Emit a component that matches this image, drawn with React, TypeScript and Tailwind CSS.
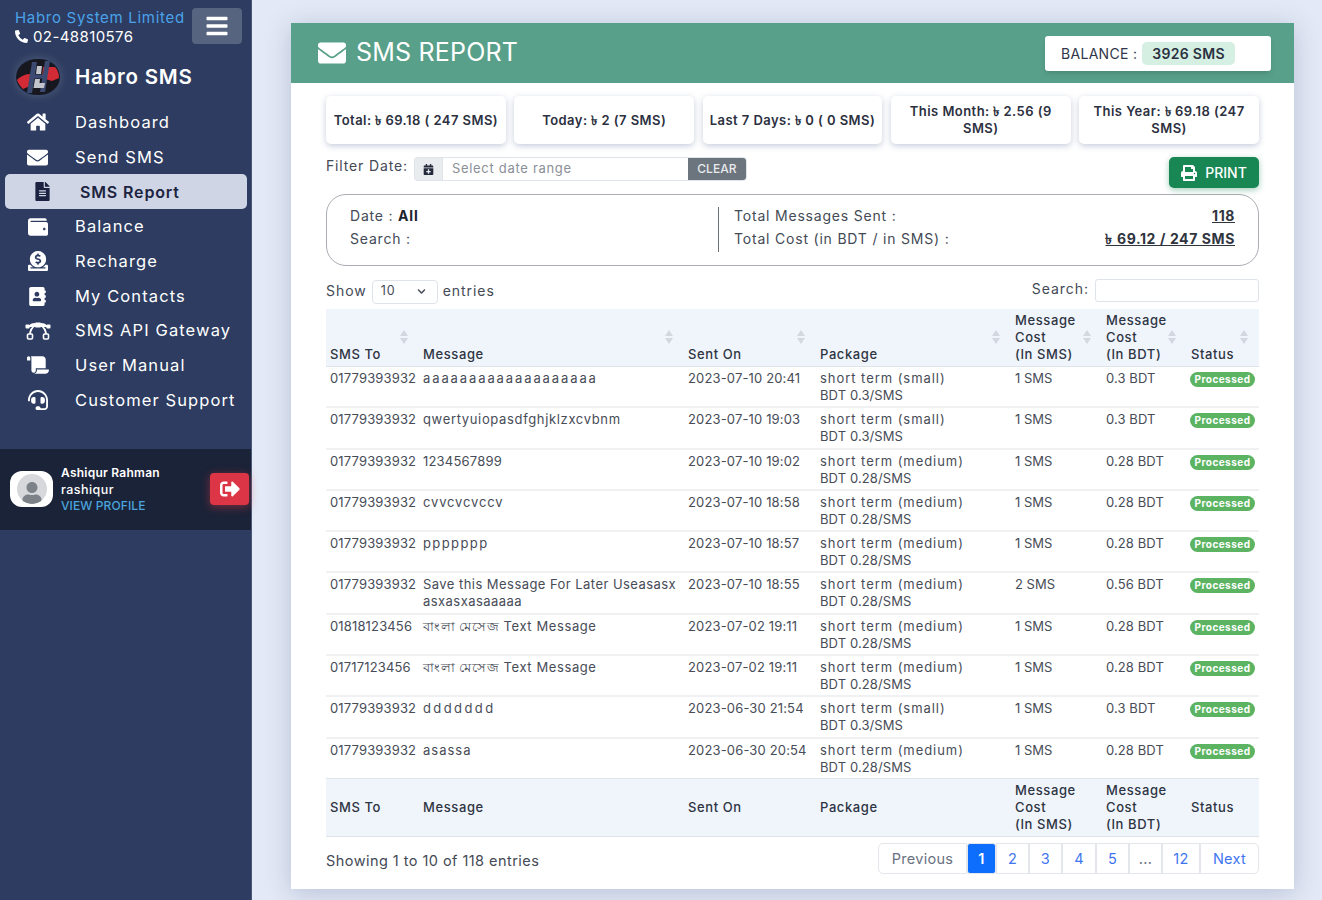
import {
  FaAddressBook,
  FaBars,
  FaCalendarPlus,
  FaChevronDown,
  FaDonate,
  FaEnvelope,
  FaFileAlt,
  FaHeadset,
  FaHome,
  FaPhoneAlt,
  FaPrint,
  FaScroll,
  FaSignOutAlt,
  FaUser,
  FaWallet,
} from "react-icons/fa";

function GatewayIcon() {
  return (
    <svg width="26" height="18" viewBox="0 0 26 18" fill="none">
      <path d="M4 5 C6 2 9 2 10 2 M16 2 C18 2 20 2 22 5 M5 13 C5 9 7 5 11 3 M21 13 C21 9 19 5 15 3 M4 4 H10 M16 4 H22" stroke="#fff" strokeWidth="1.8" />
      <rect x="10" y="0.5" width="6" height="5" rx="1" fill="#fff" />
      <rect x="0.5" y="2.5" width="4" height="4" rx="1" fill="#fff" />
      <rect x="21.5" y="2.5" width="4" height="4" rx="1" fill="#fff" />
      <rect x="2.5" y="12" width="5" height="5" rx="1" fill="#2d3c60" stroke="#fff" strokeWidth="1.6" />
      <rect x="18.5" y="12" width="5" height="5" rx="1" fill="#2d3c60" stroke="#fff" strokeWidth="1.6" />
    </svg>
  );
}

const navItems = [
  { label: "Dashboard", icon: <FaHome size={22} /> },
  { label: "Send SMS", icon: <FaEnvelope size={21} /> },
  { label: "SMS Report", icon: <FaFileAlt size={19} />, active: true },
  { label: "Balance", icon: <FaWallet size={20} /> },
  { label: "Recharge", icon: <FaDonate size={20} /> },
  { label: "My Contacts", icon: <FaAddressBook size={19} /> },
  { label: "SMS API Gateway", icon: <GatewayIcon /> },
  { label: "User Manual", icon: <FaScroll size={22} /> },
  { label: "Customer Support", icon: <FaHeadset size={20} /> },
];

const stats = [
  "Total: ৳ 69.18 ( 247 SMS)",
  "Today: ৳ 2 (7 SMS)",
  "Last 7 Days: ৳ 0 ( 0 SMS)",
  "This Month: ৳ 2.56 (9 SMS)",
  "This Year: ৳ 69.18 (247 SMS)",
];

const small = ["short term (small)", "BDT 0.3/SMS", "1 SMS", "0.3 BDT"];
const medium = ["short term (medium)", "BDT 0.28/SMS", "1 SMS", "0.28 BDT"];

// message widths differ a lot from the original face, so spacing is per row
const rows = [
  { track: "tracking-[1.9px]", cells: ["01779393932", "aaaaaaaaaaaaaaaaaaa", "2023-07-10 20:41", ...small] },
  { track: "tracking-[0.65px]", cells: ["01779393932", "qwertyuiopasdfghjklzxcvbnm", "2023-07-10 19:03", ...small] },
  { track: "tracking-[0.2px]", cells: ["01779393932", "1234567899", "2023-07-10 19:02", ...medium] },
  { track: "tracking-[0.85px]", cells: ["01779393932", "cvvcvcvccv", "2023-07-10 18:58", ...medium] },
  { track: "tracking-[1.4px]", cells: ["01779393932", "ppppppp", "2023-07-10 18:57", ...medium] },
  { track: "tracking-[0.45px]", cells: ["01779393932", "Save this Message For Later Useasasx asxasxasaaaaa", "2023-07-10 18:55", "short term (medium)", "BDT 0.28/SMS", "2 SMS", "0.56 BDT"] },
  { track: "tracking-[0.6px]", cells: ["01818123456", "বাংলা মেসেজ Text Message", "2023-07-02 19:11", ...medium] },
  { track: "tracking-[0.6px]", cells: ["01717123456", "বাংলা মেসেজ Text Message", "2023-07-02 19:11", ...medium] },
  { track: "tracking-[2.4px]", cells: ["01779393932", "ddddddd", "2023-06-30 21:54", ...small] },
  { track: "tracking-[1px]", cells: ["01779393932", "asassa", "2023-06-30 20:54", ...medium] },
];

const columns = [
  { label: ["SMS To"], w: "w-[93px]" },
  { label: ["Message"], w: "w-[265px]" },
  { label: ["Sent On"], w: "w-[132px]" },
  { label: ["Package"], w: "w-[195px]" },
  { label: ["Message", "Cost", "(In SMS)"], w: "w-[91px]" },
  { label: ["Message", "Cost", "(In BDT)"], w: "w-[85px]" },
  { label: ["Status"], w: "w-[72px]" },
];

const pages = [
  { t: "Previous", w: "w-[89px]", cls: "text-gray-500 rounded-l-[5px]" },
  { t: "1", w: "w-[29px]", cls: "bg-[#0d6efd] text-white border-[#0d6efd] rounded-[3px] font-semibold" },
  { t: "2", w: "w-[33px]", cls: "text-[#3f76f0]" },
  { t: "3", w: "w-[33px]", cls: "text-[#3f76f0]" },
  { t: "4", w: "w-[34px]", cls: "text-[#3f76f0]" },
  { t: "5", w: "w-[33px]", cls: "text-[#3f76f0]" },
  { t: "...", w: "w-[33px]", cls: "text-gray-500" },
  { t: "12", w: "w-[38px]", cls: "text-[#3f76f0]" },
  { t: "Next", w: "w-[59px]", cls: "text-[#3f76f0] rounded-r-[5px]" },
];

function Logo() {
  return (
    <svg width="44" height="36" viewBox="0 0 44 36" className="rounded-full shadow-[0_0_10px_rgba(255,255,255,0.18)]">
      <ellipse cx="22" cy="18" rx="22" ry="18" fill="#17181f" />
      <path d="M1 21 C6 16 10 15 16 15 L14 27 L7 30 C4 27 2 24 1 21 Z" fill="#d22b35" />
      <path d="M27 8 L39 8 C42 11 43 15 43 19 L36 22 L26 19 Z" fill="#d22b35" />
      <path d="M16 3 H21 L16 34 H11 Z" fill="#3c4a72" />
      <path d="M29 2 H34 L29 33 H24 Z" fill="#3c4a72" />
      <path d="M14 15.5 H29 L28.5 19.5 H13.5 Z" fill="#3c4a72" />
      <path d="M21 7 H26 L25 15 H20 Z" fill="#c2c5cb" />
      <path d="M19 20 H24 L23.5 24 H29 L28 29 H17.5 Z" fill="#c2c5cb" />
    </svg>
  );
}

function SortArrows() {
  return (
    <svg width="8" height="14" viewBox="0 0 8 14" className="absolute right-[11px] top-[21px]">
      <path d="M4 0 L8 6 H0 Z" fill="#d3d7de" />
      <path d="M4 14 L8 8 H0 Z" fill="#d3d7de" />
    </svg>
  );
}

function Sidebar() {
  return (
    <aside className="w-[252px] shrink-0 bg-[#2d3c60] min-h-[900px] border-r border-[#4a5878]">
      <div className="flex justify-between pl-[15px] pr-[9px] pt-[8px]">
        <div>
          <div className="text-[15px] leading-[19px] tracking-[0.7px] text-[#4aa3ea]">Habro System Limited</div>
          <div className="flex items-center gap-[5px] text-[15px] leading-[19px] tracking-[0.4px] text-white">
            <FaPhoneAlt size={13} />
            02-48810576
          </div>
        </div>
        <div className="w-[50px] h-[36px] rounded-[4px] bg-[#56647f] flex items-center justify-center text-white">
          <FaBars size={24} />
        </div>
      </div>
      <div className="flex items-center mt-[10px] pl-[16px] h-[42px]">
        <div className="w-[59px] shrink-0"><Logo /></div>
        <span className="text-[20.5px] font-semibold text-white tracking-[0.75px]">Habro SMS</span>
      </div>
      <nav className="mt-[7px]">
        {navItems.map((item) =>
          item.active ? (
            <div key={item.label} className="flex items-center h-[35px] mx-[5px] w-[242px] rounded-[5px] bg-[#cfd5e5] text-[#1c2340]">
              <span className="w-[75px] flex justify-center">{item.icon}</span>
              <span className="text-[16px] font-semibold tracking-[0.85px]">{item.label}</span>
            </div>
          ) : (
            <div key={item.label} className="flex items-center h-[34.7px] text-white">
              <span className="w-[75px] flex justify-center">{item.icon}</span>
              <span className="text-[16.5px] tracking-[1.1px]">{item.label}</span>
            </div>
          ),
        )}
      </nav>
      <div className="mt-[31px] h-[81px] bg-[#1b2338] flex items-center pl-[10px] pr-[2px]">
        <div className="w-[43px] h-[36px] rounded-[12px] bg-white flex items-center justify-center shrink-0">
          <div className="w-[30px] h-[30px] rounded-full bg-[#d6d8dc] overflow-hidden flex items-end justify-center text-[#7c8288]">
            <FaUser size={22} />
          </div>
        </div>
        <div className="ml-[8px] grow text-white">
          <div className="text-[12px] leading-[16px] font-semibold tracking-[0.25px]">Ashiqur Rahman</div>
          <div className="text-[12.5px] leading-[17px] font-medium tracking-[0.45px]">rashiqur</div>
          <div className="text-[12px] leading-[16px] font-medium text-[#4aa3dc] tracking-[0.1px]">VIEW PROFILE</div>
        </div>
        <div className="w-[39px] h-[32px] rounded-[4px] bg-[#dc3545] shadow-[0_2px_8px_rgba(220,53,69,0.5)] flex items-center justify-center text-white">
          <FaSignOutAlt size={20} />
        </div>
      </div>
    </aside>
  );
}

function Table() {
  return (
    <table className="w-[933px] table-fixed border-collapse mt-[5px] text-[13px] text-[#474c57]">
      <colgroup>
        {columns.map((c, i) => <col key={i} className={c.w} />)}
      </colgroup>
      <thead>
        <tr className="bg-[#f0f5fc] border-b border-[#dfe3ea] h-[57px]">
          {columns.map((c, i) => (
            <th key={i} className="relative align-bottom text-left font-medium text-[#2e3442] px-[4px] pb-[3px] leading-[17px] tracking-[0.6px]">
              {c.label.map((l) => <div key={l}>{l}</div>)}
              <SortArrows />
            </th>
          ))}
        </tr>
      </thead>
      <tbody>
        {rows.map((r, i) => (
          <tr key={i} className="h-[41.3px] border-b-2 border-[#f0f1f3] last:border-b-0">
            <td className="align-top px-[4px] pt-[3px] leading-[17px] tracking-[0.15px]">{r.cells[0]}</td>
            <td className={`align-top px-[4px] pt-[3px] leading-[17px] ${r.track}`}>{r.cells[1]}</td>
            <td className="align-top px-[4px] pt-[3px] leading-[17px] tracking-[0.15px] whitespace-nowrap">{r.cells[2]}</td>
            <td className="align-top px-[4px] pt-[3px] leading-[17px]">
              <div className="tracking-[0.95px]">{r.cells[3]}</div>
              <div className="tracking-[0.1px]">{r.cells[4]}</div>
            </td>
            <td className="align-top px-[4px] pt-[3px] leading-[17px]">{r.cells[5]}</td>
            <td className="align-top px-[4px] pt-[3px] leading-[17px] tracking-[0.1px]">{r.cells[6]}</td>
            <td className="align-top pl-[3px] pt-[5px]">
              <span className="flex items-center justify-center w-[65px] h-[15px] rounded-full bg-[#5cb463] text-white text-[10px] font-bold tracking-[0.45px]">Processed</span>
            </td>
          </tr>
        ))}
      </tbody>
      <tfoot>
        <tr className="bg-[#f0f5fc] border-y border-[#dfe3ea] h-[58px]">
          {columns.map((c, i) => (
            <th key={i} className="align-middle text-left font-medium text-[#2e3442] px-[4px] leading-[17px] tracking-[0.6px]">
              {c.label.map((l) => <div key={l}>{l}</div>)}
            </th>
          ))}
        </tr>
      </tfoot>
    </table>
  );
}

export default function App() {
  return (
    <div className="flex w-[1322px] h-[900px] overflow-hidden bg-[#e3e9f6] font-['Inter','Noto_Sans','DejaVu_Sans',sans-serif]">
      <Sidebar />
      <main className="pl-[39px] pt-[23px]">
        <div className="w-[1003px] h-[866px] bg-white shadow-[0_4px_24px_rgba(60,75,120,0.25)]">
          <div className="h-[60px] bg-[#58a08a] flex items-center justify-between pl-[27px] pr-[23px]">
            <div className="flex items-center gap-[10px] text-white text-[25px] tracking-[0.2px]">
              <FaEnvelope size={28} />
              SMS REPORT
            </div>
            <div className="w-[226px] h-[35px] bg-white rounded-[3px] shadow-md flex items-center pl-[16px] text-[14px] text-[#30364a] tracking-[0.3px]">
              BALANCE :
              <span className="ml-[5px] px-[10px] h-[23px] flex items-center rounded-[5px] bg-[#d5efe2] font-semibold text-[#2a3040]">3926 SMS</span>
            </div>
          </div>
          <div className="px-[35px] pt-[13px]">
            <div className="grid grid-cols-5 gap-[8.5px]">
              {stats.map((s) => (
                <div key={s} className="h-[48px] rounded-[5px] bg-white shadow-[0_2px_6px_rgba(70,85,140,0.3)] flex items-center justify-center text-center px-[6px] text-[13px] leading-[17px] font-semibold text-[#2c3040] tracking-[0.45px]">
                  {s}
                </div>
              ))}
            </div>
            <div className="flex justify-between mt-[13px] h-[31px]">
              <div className="flex items-start">
                <span className="text-[14px] leading-[18px] text-[#444a56] tracking-[0.85px]">Filter Date:</span>
                <div className="ml-[6px] w-[333px] h-[24px] flex border border-[#dfe3ea] rounded-l-[3px] rounded-r-[4px]">
                  <span className="w-[28px] bg-[#e9ecef] border-r border-[#dfe3ea] flex items-center justify-center text-[#23283a]"><FaCalendarPlus size={11} /></span>
                  <span className="grow flex items-center pl-[9px] text-[13px] text-[#8a8f98] tracking-[0.7px]">Select date range</span>
                  <span className="w-[58px] bg-[#6c757d] text-[#e8eaec] text-[12px] font-medium rounded-r-[3px] flex items-center justify-center">CLEAR</span>
                </div>
              </div>
              <div className="w-[90px] h-[31px] bg-[#198754] rounded-[5px] text-white text-[14px] font-medium flex items-center justify-center gap-[8px] shadow-[0_2px_6px_rgba(25,135,84,0.4)]">
                <FaPrint size={16} />
                PRINT
              </div>
            </div>
            <div className="mt-[6px] h-[72px] border border-[#a9adb3] rounded-[20px] flex pt-[9px] pl-[23px] pr-[23px] text-[14px] text-[#444a56] tracking-[0.8px]">
              <div className="w-[368px] leading-[23px]">
                <div>Date : <b className="font-bold text-[#20242e]">All</b></div>
                <div>Search :</div>
              </div>
              <div className="h-[45px] mt-[3px] border-l border-[#6b6f76] pl-[15px] grow flex justify-between leading-[23px]">
                <div className="-mt-[3px]">
                  <div>Total Messages Sent :</div>
                  <div>Total Cost (in BDT / in SMS) :</div>
                </div>
                <div className="-mt-[3px] text-right font-bold text-[#30343e] underline tracking-[0.6px]">
                  <div>118</div>
                  <div>৳ 69.12 / 247 SMS</div>
                </div>
              </div>
            </div>
            <div className="flex justify-between mt-[13px] h-[25px] text-[14px] text-[#444a56] tracking-[0.95px]">
              <div className="flex items-center">
                <span className="-translate-y-px">Show</span>
                <span className="mx-[5px] w-[66px] h-[24px] border border-[#dfe3ea] rounded-[4px] flex items-center justify-between px-[8px] text-[12.5px]">
                  10
                  <FaChevronDown size={9} className="mr-[3px]" />
                </span>
                <span className="-translate-y-px">entries</span>
              </div>
              <div className="flex items-start">
                <span className="leading-[20px]">Search:</span>
                <span className="ml-[6px] w-[164px] h-[23px] border border-[#dfe3ea] rounded-[3px]" />
              </div>
            </div>
            <Table />
            <div className="flex items-start justify-between mt-[6px] text-[14.5px] text-[#444a56]">
              <span className="mt-[7px] tracking-[0.45px]">Showing 1 to 10 of 118 entries</span>
              <div className="flex h-[31px]">
                {pages.map((p) => (
                  <span key={p.t} className={`${p.w} ${p.cls} border border-[#e3e6ea] flex items-center justify-center tracking-[0.3px]`}>{p.t}</span>
                ))}
              </div>
            </div>
          </div>
        </div>
      </main>
    </div>
  );
}
